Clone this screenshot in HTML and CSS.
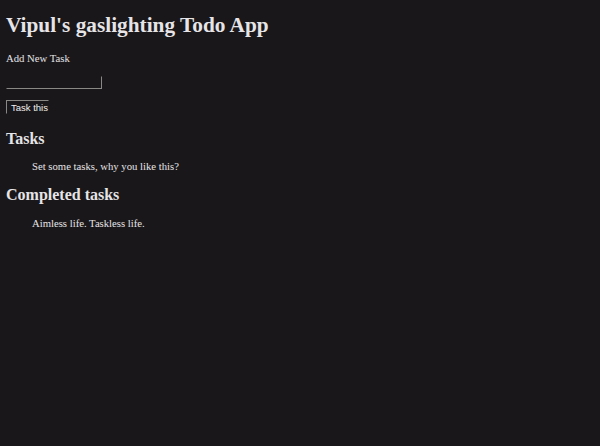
FILE: index.html
```html
<!DOCTYPE html>
<html>
<head>
<meta charset="utf-8">
<link rel="stylesheet" href="styles.css">
</head>
<body>
<h1 class="title">Vipul's gaslighting Todo App</h1>
<div class="label">Add New Task</div>
<div class="field"><input class="input" type="text"></div>
<button class="btn">Task this</button>
<h2 class="section">Tasks</h2>
<ul class="list"><li>Set some tasks, why you like this?</li></ul>
<h2 class="section section-done">Completed tasks</h2>
<ul class="list list-done"><li>Aimless life. Taskless life.</li></ul>
</body>
</html>
```

FILE: styles.css
```css
html, body {
  background: #19171a;
}
body {
  margin: 0;
  padding: 0 6px;
  color: #e6e4e6;
  font-family: "Liberation Serif", serif;
}
.title {
  font-size: 21.3px;
  font-weight: bold;
  margin: 13px 0 0;
  line-height: 25px;
}
.label {
  font-size: 10.7px;
  margin-top: 13px;
  line-height: 14px;
}
.field {
  margin-top: 11px;
  height: 13px;
}
.input {
  display: block;
  box-sizing: border-box;
  width: 96px;
  height: 13px;
  margin: 0;
  padding: 0;
  background: transparent;
  border: 1px solid #19171a;
  border-right-color: #8a8884;
  border-bottom-color: #8a8884;
}
.btn {
  display: block;
  margin-top: 11px;
  box-sizing: border-box;
  height: 14px;
  width: 43px;
  padding: 0 0 0 4px;
  text-align: left;
  font-family: "Liberation Sans", sans-serif;
  font-size: 9.5px;
  color: #f0f0f0;
  background: transparent;
  border: 1px solid #19171a;
  border-top-color: #8a8884;
  border-left-color: #8a8884;
}
.section {
  font-size: 16px;
  font-weight: bold;
  margin: 15px 0 0;
  line-height: 19px;
}
.section-done {
  margin-top: 12px;
}
.list {
  list-style: none;
  margin: 11px 0 0;
  padding-left: 26px;
  font-size: 10.7px;
  line-height: 14px;
}
.list-done {
  margin-top: 12px;
}
```
